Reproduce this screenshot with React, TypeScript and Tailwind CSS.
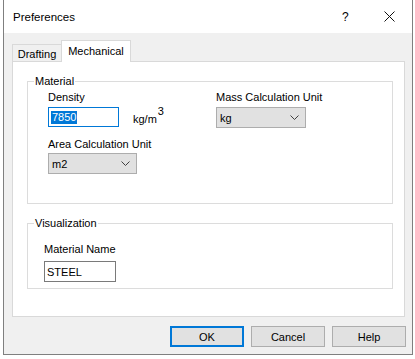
import React from "react";

function Chevron() {
  return (
    <svg width="9" height="5" viewBox="0 0 9 5" className="block">
      <path d="M0.5 0.5 L4.5 4.5 L8.5 0.5" fill="none" stroke="#404040" strokeWidth="1" />
    </svg>
  );
}

function Select({ value, w }: { value: string; w: string }) {
  return (
    <div className={`${w} h-[21px] bg-[#e1e1e1] border border-[#adadad] flex items-center justify-between pl-[3px] pr-[6px]`}>
      <span>{value}</span>
      <Chevron />
    </div>
  );
}

function Button({ label, primary }: { label: string; primary?: boolean }) {
  return (
    <div
      className={`w-[74px] h-[21px] bg-[#e1e1e1] flex items-center justify-center ${
        primary ? "border-2 border-[#0078d7]" : "border border-[#adadad]"
      }`}
    >
      {label}
    </div>
  );
}

export default function App() {
  return (
    <div
      className="w-[415px] h-[359px] bg-white text-[11px] leading-[14px] text-black"
      style={{ fontFamily: '"Liberation Sans", Arial, sans-serif' }}
    >
      <div className="ml-[3px] w-[410px] h-[355px] flex flex-col bg-[#f0f0f0] border-x border-b border-[#7f7f7f]">
        {/* Title bar */}
        <div className="h-[33px] bg-white flex items-center pl-[9px] shrink-0">
          <span className="flex-1 text-[11.5px]">Preferences</span>
          <span className="w-[10px] text-[12px] mr-[32px] pt-[1px]">?</span>
          <svg width="11" height="11" viewBox="0 0 11 11" className="mr-[17px]">
            <path d="M0.5 0.5 L10.5 10.5 M10.5 0.5 L0.5 10.5" stroke="#111" strokeWidth="1" fill="none" />
          </svg>
        </div>

        {/* Body */}
        <div className="flex-1 flex flex-col pl-[8px] pr-[7px] pt-[7px]">
          {/* Tabs */}
          <div className="h-[21px] flex items-end">
            <div className="w-[49px] h-[17px] border-l border-t border-[#d9d9d9] bg-[#f0f0f0] flex items-center justify-center pt-[2px]">
              Drafting
            </div>
            <div className="relative z-10 w-[70px] h-[22px] mb-[-1px] border-x border-t border-[#d9d9d9] bg-white flex justify-center pt-[3px]">
              Mechanical
            </div>
          </div>

          {/* Panel */}
          <div className="h-[256px] bg-white border border-[#d9d9d9] flex flex-col pl-[14px] pr-[11px] pt-[12px]">
            <fieldset className="h-[130px] border border-[#dcdcdc]">
              <legend className="ml-[6px] px-[1px]">Material</legend>
              <div className="grid grid-cols-[168px_1fr] pl-[20px] pt-[2px]">
                <div className="flex flex-col">
                  <span>Density</span>
                  <div className="mt-[3px] flex items-end">
                    <div className="w-[71px] h-[20px] border border-[#0078d7] flex items-center pl-[2px]">
                      <span className="bg-[#0078d7] text-white leading-[13px] px-[1px]">7850</span>
                    </div>
                    <span className="ml-[14px] mb-[1px]">kg/m</span>
                    <span className="self-start mt-[-3px] ml-[1px]">3</span>
                  </div>
                  <span className="mt-[10px]">Area Calculation Unit</span>
                  <div className="mt-[2px]">
                    <Select value="m2" w="w-[89px]" />
                  </div>
                </div>
                <div className="flex flex-col">
                  <span>Mass Calculation Unit</span>
                  <div className="mt-[3px]">
                    <Select value="kg" w="w-[90px]" />
                  </div>
                </div>
              </div>
            </fieldset>

            <fieldset className="mt-[12px] h-[73px] border border-[#dcdcdc]">
              <legend className="ml-[6px] px-[1px]">Visualization</legend>
              <div className="flex flex-col pl-[16px] pt-[12px]">
                <span>Material Name</span>
                <div className="mt-[5px] w-[72px] h-[21px] border border-[#7a7a7a] bg-white flex items-center pl-[2px]">
                  STEEL
                </div>
              </div>
            </fieldset>
          </div>

          {/* Buttons */}
          <div className="mt-[9px] mr-[-1px] flex justify-end gap-[7px]">
            <Button label="OK" primary />
            <Button label="Cancel" />
            <Button label="Help" />
          </div>
        </div>
      </div>
    </div>
  );
}
